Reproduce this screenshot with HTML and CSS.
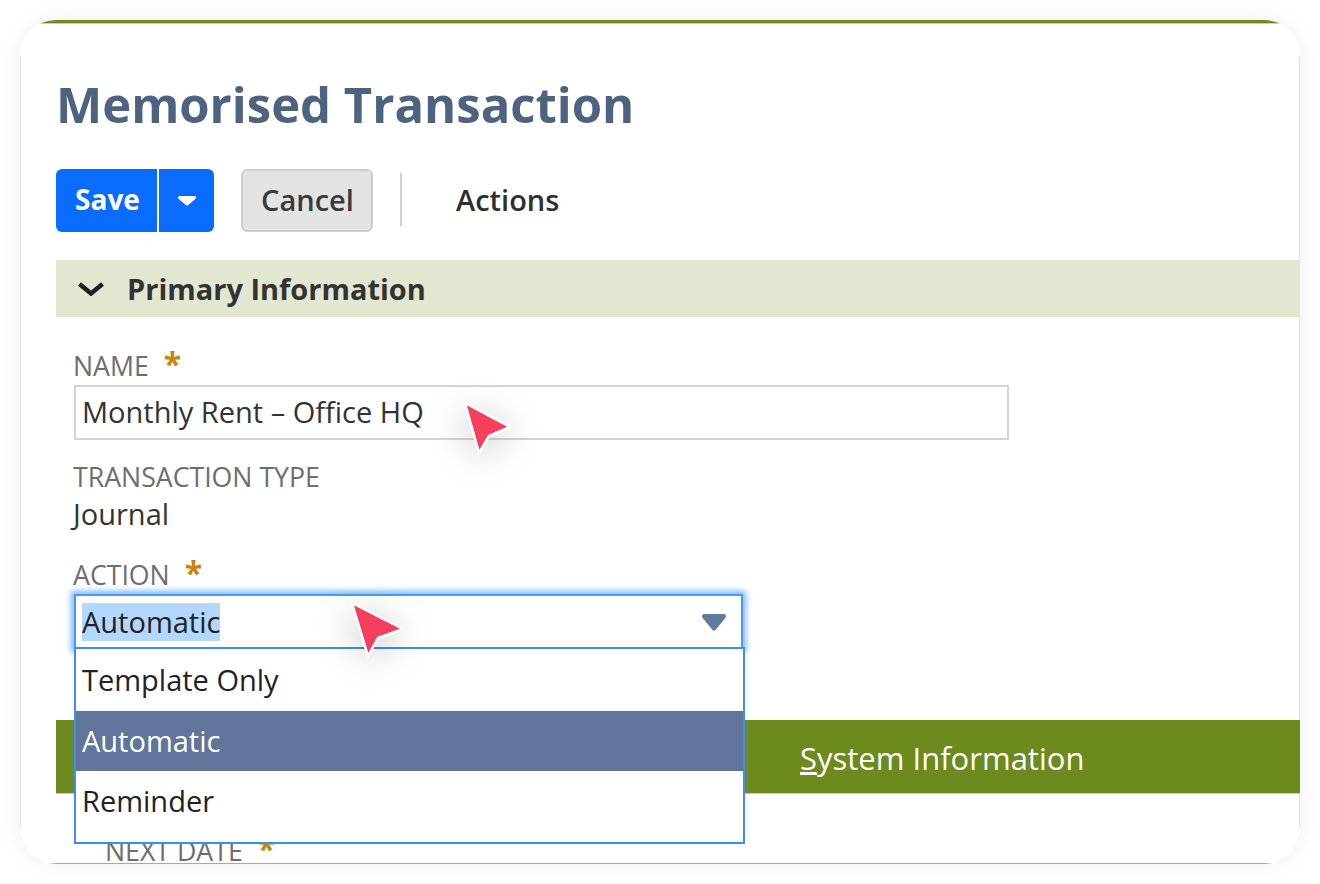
FILE: index.html
```html
<!DOCTYPE html>
<html lang="en">
<head>
    <meta charset="UTF-8">
    <meta name="viewport" content="width=device-width, initial-scale=1.0">
    <link rel="stylesheet" href="styles.css">
    <title>Memorised Transaction</title>
</head>
<body>
    <main class="card">
        <div class="top-line"></div>
        <div class="content">
            <h1 class="title">Memorised Transaction</h1>

            <div class="toolbar">
                <div class="save-group">
                    <button class="save-btn">Save</button>
                    <button class="save-more" aria-label="More save options">
                        <svg width="20" height="10" viewBox="0 0 20 10"><path d="M1 1.5Q1 0 2.5 0h15Q19 0 19 1.5 19 2.500 18 3.200L11 9.200Q10 10 9 9.200L2 3.200Q1 2.500 1 1.500Z" fill="#fff"/></svg>
                    </button>
                </div>
                <button class="cancel-btn">Cancel</button>
                <span class="toolbar-sep"></span>
                <span class="actions">Actions</span>
            </div>

            <div class="section-bar">
                <svg class="chevron" width="26" height="14" viewBox="0 0 26 14"><path d="M1.500 2 13 11.500 24.500 2" fill="none" stroke="#1f1f1f" stroke-width="4.500"/></svg>
                <span>Primary Information</span>
            </div>

            <section class="form">
                <label class="field-label">NAME <span class="star">*</span></label>
                <div class="text-input">Monthly Rent – Office HQ</div>

                <label class="field-label type-label">TRANSACTION TYPE</label>
                <div class="field-value">Journal</div>

                <label class="field-label action-label">ACTION <span class="star">*</span></label>
                <div class="select-wrap">
                    <div class="select-box">
                        <span class="selected-text">Automatic</span>
                        <svg width="26" height="17" viewBox="0 0 26 17"><path d="M1 2Q1 0 3 0h20Q25 0 25 2 25 3.500 24 4.500L14.500 16Q13 17.500 11.500 16L2 4.500Q1 3.500 1 2Z" fill="#5f7b9f"/></svg>
                    </div>
                    <ul class="dropdown">
                        <li class="first">Template Only</li>
                        <li class="active">Automatic</li>
                        <li>Reminder</li>
                    </ul>
                </div>
            </section>

            <div class="tab-band">
                <span><u>S</u>ystem Information</span>
            </div>

            <div class="next-date">NEXT DATE <span class="star">*</span></div>
        </div>
        <div class="bottom-line"></div>

        <svg class="pointer pointer-name" width="60" height="64" viewBox="0 0 60 64"><path d="M7 5 52 29 31 38 21 55Z" fill="#f53f5f" stroke="#fff" stroke-width="2.500" stroke-linejoin="round"/></svg>
        <svg class="pointer pointer-action" width="64" height="68" viewBox="0 0 64 68"><path d="M6 5 57 31 32 40 22 58Z" fill="#f53f5f" stroke="#fff" stroke-width="2.500" stroke-linejoin="round"/></svg>
    </main>
</body>
</html>
```

FILE: styles.css
```css
*{
    margin: 0;
    padding: 0;
    box-sizing: border-box;
    font-family: "Open Sans", "Liberation Sans", sans-serif;
}
body{
    width: 1320px;
    height: 884px;
    padding: 20px;
    background-color: #fff;
    overflow: hidden;
}

/* side hairlines stop where the corners start */
.card{
    position: relative;
    display: flex;
    flex-direction: column;
    width: 1280px;
    height: 844px;
    background:
        linear-gradient(#e6e6e6, #e6e6e6) left center / 1px 772px no-repeat,
        linear-gradient(#e2e2e2, #e2e2e2) right center / 1px 772px no-repeat,
        #fff;
    border-radius: 36px;
    overflow: hidden;
    box-shadow: 0 0 22px rgba(0, 0, 0, 0.07);
}
.top-line{
    flex-shrink: 0;
    height: 3px;
    background-color: #6f8c20;
    box-shadow: 0 1px #c6d3a0;
}
.content{
    flex: 1;
    min-height: 0;
    padding-left: 36px;
}
.bottom-line{
    flex-shrink: 0;
    height: 1px;
    background-color: #a8a8a8;
}

.title{
    margin: 50px 0 0 0;
    font-size: 49px;
    line-height: 62px;
    font-weight: 700;
    color: #4d6380;
}

/* toolbar */
.toolbar{
    display: flex;
    align-items: center;
    margin-top: 34px;
    height: 63px;
}
.save-group{
    display: flex;
    width: 158px;
    height: 63px;
    background-color: #0a6cff;
    border-radius: 6px;
}
.save-btn,
.save-more,
.cancel-btn{
    border: none;
    background: none;
    font-size: 29px;
    cursor: pointer;
}
.save-btn{
    width: 103px;
    padding: 0 0 3px 2px;
    color: #fff;
    font-size: 28px;
    font-weight: 700;
    border-right: 2px solid #fff;
}
.save-more{
    flex: 1;
    display: flex;
    align-items: center;
    justify-content: center;
}
.cancel-btn{
    width: 132px;
    height: 63px;
    margin-left: 27px;
    padding: 0 0 3px 1px;
    color: #3a3a3a;
    font-weight: 600;
    background-color: #e3e3e3;
    border: 2px solid #cdcdcd;
    border-radius: 6px;
}
.toolbar-sep{
    width: 2px;
    height: 53px;
    margin: -2px 0 0 27px;
    background-color: #d0d0d0;
}
.actions{
    margin: -2px 0 0 54px;
    font-size: 29px;
    font-weight: 600;
    color: #2f2f2f;
}

.section-bar{
    display: flex;
    align-items: center;
    height: 57px;
    margin-top: 28px;
    padding-left: 22px;
    gap: 23px;
    background-color: #e2e7d2;
    font-size: 29px;
    font-weight: 700;
    color: #333;
}

/* form */
.form{
    padding: 30px 0 0 18px;
    height: 403px;
}
.field-label{
    display: block;
    margin-left: -1px;
    font-size: 26.700px;
    line-height: 38px;
    color: #6e6e6e;
}
.star{
    margin-left: 8px;
    color: #c9830f;
    font-weight: 700;
    font-size: 32px;
    line-height: 20px;
}
.text-input{
    width: 935px;
    height: 55px;
    padding-left: 6px;
    border: 2px solid #d4d4d4;
    font-size: 29px;
    line-height: 50px;
    color: #333;
}
.type-label{
    margin-top: 18px;
}
.field-value{
    margin-left: -1px;
    font-size: 29px;
    line-height: 36px;
    color: #333;
}
.action-label{
    margin-top: 24px;
}
.select-wrap{
    position: relative;
    width: 669px;
}
.select-box{
    display: flex;
    align-items: center;
    justify-content: space-between;
    height: 56px;
    padding: 0 14px 0 6px;
    border: 2px solid #4a9bf0;
    box-shadow: 0 0 6px 3px rgba(74, 155, 240, 0.7);
    font-size: 29px;
    color: #222;
}
.selected-text{
    line-height: 38px;
    background-color: #b3d7ff;
}

/* open list lies over the band below */
.dropdown{
    position: absolute;
    top: 53px;
    left: 0;
    z-index: 2;
    width: 671px;
    height: 197px;
    padding-top: 2px;
    list-style: none;
    background-color: #fff;
    border: 2px solid #3b8ef5;
    font-size: 29px;
    color: #222;
}
.dropdown li{
    height: 60px;
    padding-left: 6px;
    line-height: 60px;
}
.dropdown li.first{
    line-height: 57px;
}
.dropdown li.active{
    color: #fff;
    background-color: #61759a;
}

.tab-band{
    height: 73px;
    padding-left: 744px;
    background-color: #6d8a1e;
    box-shadow: 0 1px #c6d3a0;
    font-size: 31px;
    line-height: 76px;
    color: #fff;
}
.next-date{
    margin: 46px 0 0 49px;
    font-size: 26.700px;
    line-height: 22px;
    color: #6e6e6e;
}

.pointer{
    position: absolute;
    z-index: 3;
    filter: drop-shadow(0 6px 18px rgba(0, 0, 0, 0.24));
}
.pointer-name{
    left: 438px;
    top: 378px;
}
.pointer-action{
    left: 326px;
    top: 578px;
}
```
